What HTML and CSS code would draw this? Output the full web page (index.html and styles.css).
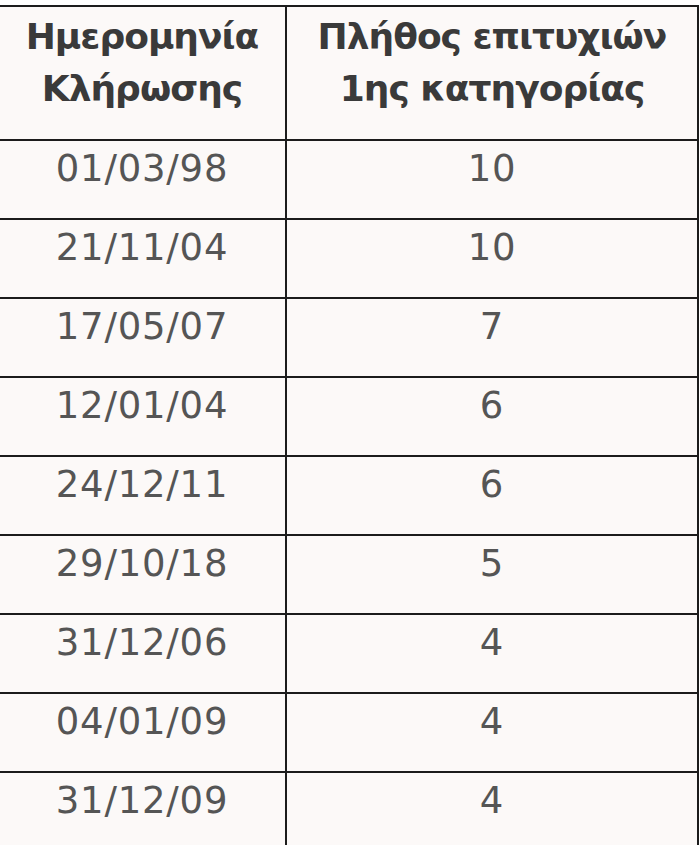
FILE: index.html
```html
<!DOCTYPE html>
<html lang="el">
<head>
<meta charset="utf-8">
<title>Κληρώσεις</title>
<link rel="stylesheet" href="styles.css">
</head>
<body>
<table class="draws">
  <colgroup>
    <col class="col-date">
    <col class="col-count">
  </colgroup>
  <thead>
    <tr class="head-row">
      <th>Ημερομηνία<br>Κλήρωσης</th>
      <th>Πλήθος επιτυχιών<br>1ης κατηγορίας</th>
    </tr>
  </thead>
  <tbody>
    <tr><td>01/03/98</td><td>10</td></tr>
    <tr><td>21/11/04</td><td>10</td></tr>
    <tr><td>17/05/07</td><td>7</td></tr>
    <tr><td>12/01/04</td><td>6</td></tr>
    <tr><td>24/12/11</td><td>6</td></tr>
    <tr><td>29/10/18</td><td>5</td></tr>
    <tr><td>31/12/06</td><td>4</td></tr>
    <tr><td>04/01/09</td><td>4</td></tr>
    <tr><td>31/12/09</td><td>4</td></tr>
  </tbody>
</table>
</body>
</html>
```
FILE: styles.css
```css
html, body {
  margin: 0;
  padding: 0;
  background: #ffffff;
  overflow: hidden;
}

body {
  font-family: "DejaVu Sans", Verdana, sans-serif;
}

.draws {
  border-collapse: collapse;
  margin: 5px 0 0 -3px;
  width: 700px;
  table-layout: fixed;
  background: #fcf9f8;
}

.col-date { width: 288px; }
.col-count { width: 412px; }

.draws th,
.draws td {
  border: 2px solid #1c1c1c;
  text-align: center;
  vertical-align: top;
  padding: 0;
}

.draws th {
  color: #3a3a3a;
  font-weight: bold;
  font-size: 36px;
  letter-spacing: -1px;
  line-height: 52px;
  padding-top: 4px;
}

.head-row { height: 134px; }

.draws td {
  color: #555555;
  font-size: 37px;
  letter-spacing: 0.8px;
  line-height: 48px;
  padding-top: 4px;
}

.draws tbody tr { height: 79px; }
```
